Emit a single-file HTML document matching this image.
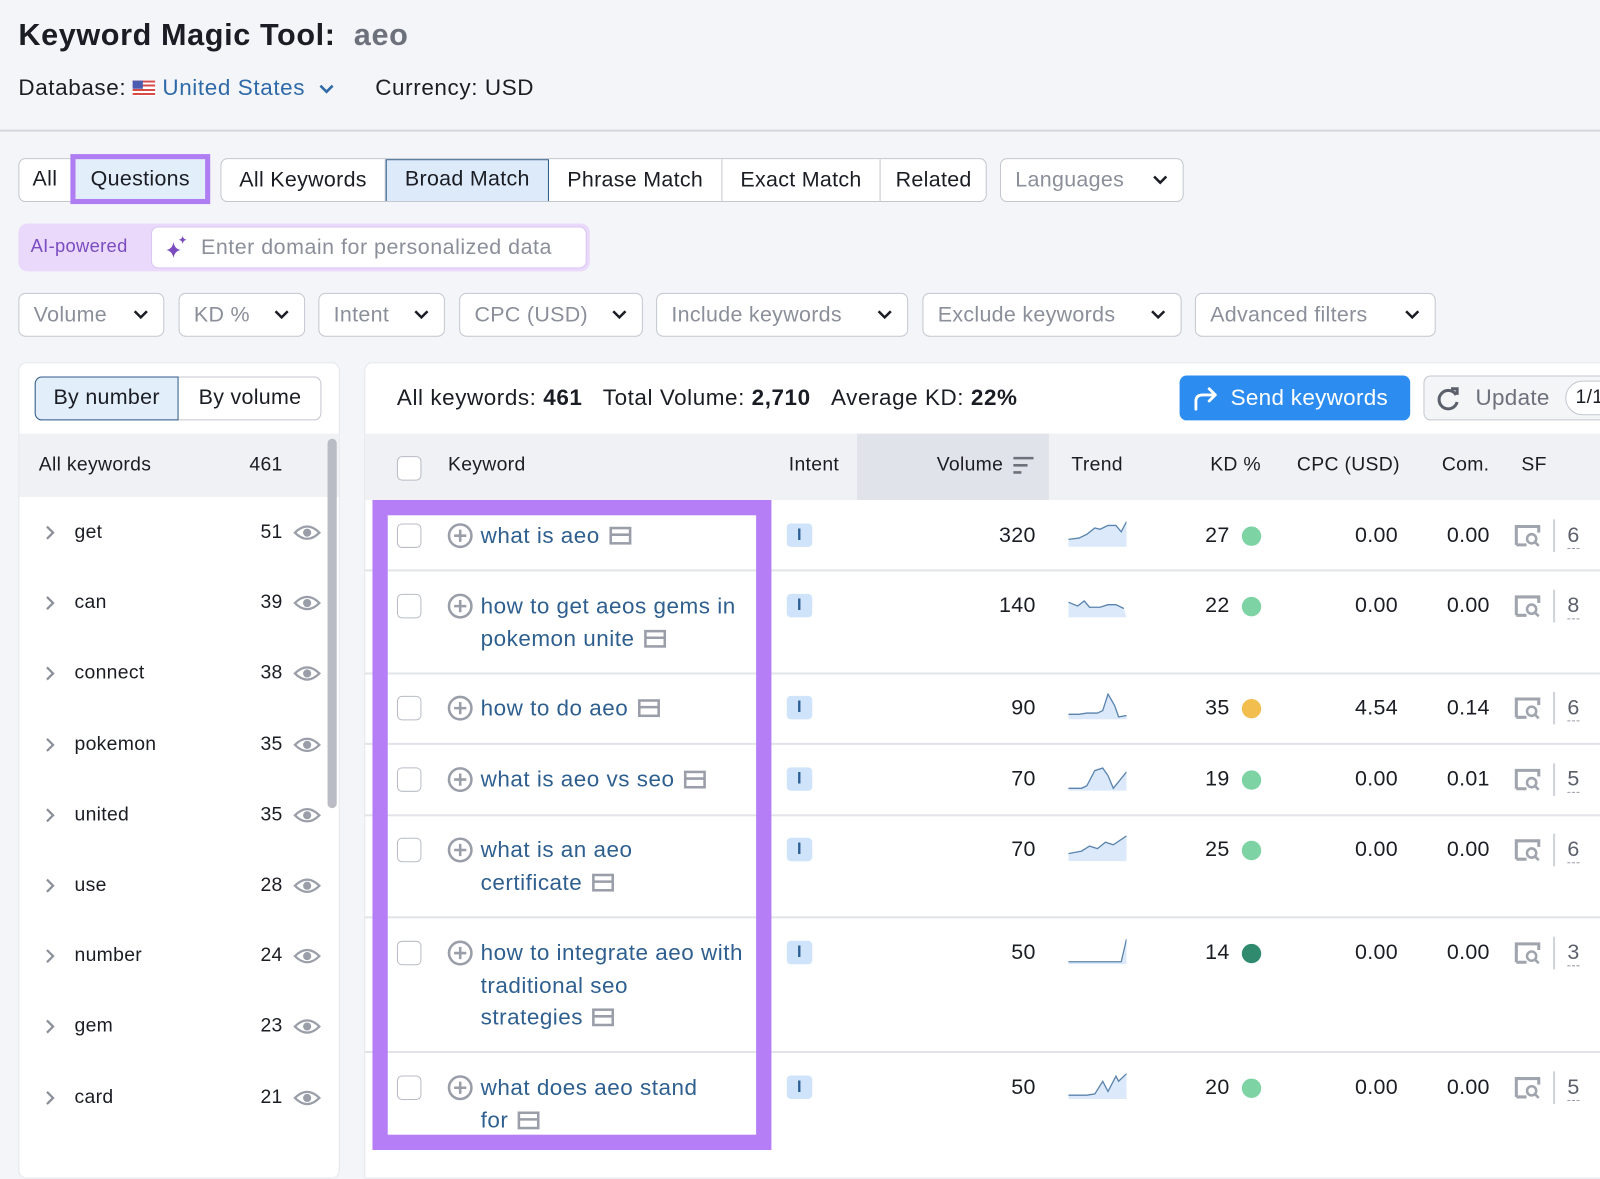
<!DOCTYPE html>
<html><head><meta charset="utf-8"><style>
*{box-sizing:border-box;margin:0;padding:0}
html,body{width:1600px;height:1152px;overflow:hidden;background:#f4f5f9}
body{font-family:"Liberation Sans",sans-serif;color:#1b1d24;letter-spacing:0.3px}
#w{position:absolute;left:0;top:0;width:1568px;height:1129px;transform:scale(1.0204);transform-origin:0 0}
.a{position:absolute}
.btn{position:absolute;height:43px;border:1px solid #c4c7d0;background:#fff;border-radius:7px;font-size:21px;line-height:41px;padding-left:14px;color:#8b8f9a}
.btn svg{position:absolute;right:14px;top:14px}
.tab{position:absolute;top:0;height:43px;line-height:41px;font-size:21px;text-align:center;border-right:1px solid #c4c7d0}
.kw{color:#2f5f8f;font-size:22px;line-height:31.5px;letter-spacing:0.5px}
.num{position:absolute;font-size:21px;text-align:right}
.cb{position:absolute;width:24px;height:24px;border:1.5px solid #b8bcc6;border-radius:5px;background:#fff}
.ib{position:absolute;width:25px;height:23px;background:#cfe3fa;border-radius:4px;color:#2c5f96;font-size:16px;font-weight:bold;text-align:center;line-height:23px}
.dot{position:absolute;width:19px;height:19px;border-radius:50%}
.sep{position:absolute;left:357px;width:1211px;height:1.5px;background:#e2e4ea}
</style></head><body><div id="w">
<div class="a" style="left:18px;top:18px;font-size:30px;font-weight:bold;letter-spacing:0.6px">Keyword Magic Tool:&nbsp; <span style="color:#6d717b">aeo</span></div>
<div class="a" style="left:18px;top:73px;font-size:22px;letter-spacing:0.6px">Database: <span style="display:inline-block;width:22px;height:15px;vertical-align:-1px;background:repeating-linear-gradient(#d64a4a 0 2px,#fff 2px 4px);position:relative"><span style="position:absolute;left:0;top:0;width:10px;height:8px;background:#4a5bb0"></span></span> <span style="color:#2f6aa8">United States</span> <svg width="16" height="12" viewBox="0 0 16 12" style="margin-left:6px"><path d="M2 3l6 6 6-6" stroke="#2f6aa8" stroke-width="2.5" fill="none"/></svg><span style="margin-left:40px">Currency: USD</span></div>
<div class="a" style="left:0;top:127px;width:1568px;height:2px;background:#d5d7de"></div>

<div class="a" style="left:18px;top:155px;width:188px;height:43px;border:1px solid #c4c7d0;border-radius:7px;background:#fff"></div>
<div class="a" style="left:18px;top:155px;width:52px;height:43px;line-height:41px;text-align:center;font-size:21px">All</div>
<div class="a" style="left:69px;top:151px;width:137px;height:49px;border:5px solid #b07ef3;background:#e3eefb;font-size:21px;line-height:39px;text-align:center">Questions</div>
<div class="a" style="left:216px;top:155px;width:751px;height:43px;border:1px solid #c4c7d0;border-radius:7px;background:#fff;overflow:hidden;color:#1b1d24">
<div class="tab" style="left:0;width:161px">All Keywords</div>
<div class="tab" style="left:161px;width:160px;background:#dceaf9;border:1.5px solid #2f5a86;line-height:38px">Broad Match</div>
<div class="tab" style="left:321px;width:170px">Phrase Match</div>
<div class="tab" style="left:491px;width:155px">Exact Match</div>
<div class="tab" style="left:646px;width:104px;border:none">Related</div>
</div>
<div class="btn" style="left:980px;top:155px;width:180px">Languages<svg width="16" height="12"><path d="M2 3l6 6 6-6" stroke="#1b1d24" stroke-width="2.5" fill="none"/></svg></div>

<div class="a" style="left:18px;top:219px;width:560px;height:47px;background:#ead9fb;border-radius:9px"></div>
<div class="a" style="left:30px;top:231px;font-size:18px;color:#7a4cc0">AI-powered</div>
<div class="a" style="left:148px;top:222px;width:427px;height:41px;background:#fff;border:1px solid #d9c7f3;border-radius:7px;font-size:21px;color:#8b8f9a;line-height:39px;padding-left:48px;letter-spacing:0.5px">Enter domain for personalized data</div>
<svg class="a" style="left:160px;top:229px" width="26" height="26" viewBox="0 0 26 26"><path d="M10 8 Q11 15 17 16 Q11 17 10 24 Q9 17 3 16 Q9 15 10 8Z" fill="#7a4cc0"/><path d="M19 2 Q19.5 5.5 23 6 Q19.5 6.5 19 10 Q18.5 6.5 15 6 Q18.5 5.5 19 2Z" fill="#7a4cc0"/></svg>

<div class="btn" style="left:18px;top:287px;width:143px">Volume<svg width="16" height="12"><path d="M2 3l6 6 6-6" stroke="#1b1d24" stroke-width="2.5" fill="none"/></svg></div>
<div class="btn" style="left:175px;top:287px;width:124px">KD %<svg width="16" height="12"><path d="M2 3l6 6 6-6" stroke="#1b1d24" stroke-width="2.5" fill="none"/></svg></div>
<div class="btn" style="left:312px;top:287px;width:124px">Intent<svg width="16" height="12"><path d="M2 3l6 6 6-6" stroke="#1b1d24" stroke-width="2.5" fill="none"/></svg></div>
<div class="btn" style="left:450px;top:287px;width:180px">CPC (USD)<svg width="16" height="12"><path d="M2 3l6 6 6-6" stroke="#1b1d24" stroke-width="2.5" fill="none"/></svg></div>
<div class="btn" style="left:643px;top:287px;width:247px">Include keywords<svg width="16" height="12"><path d="M2 3l6 6 6-6" stroke="#1b1d24" stroke-width="2.5" fill="none"/></svg></div>
<div class="btn" style="left:904px;top:287px;width:254px">Exclude keywords<svg width="16" height="12"><path d="M2 3l6 6 6-6" stroke="#1b1d24" stroke-width="2.5" fill="none"/></svg></div>
<div class="btn" style="left:1171px;top:287px;width:236px">Advanced filters<svg width="16" height="12"><path d="M2 3l6 6 6-6" stroke="#1b1d24" stroke-width="2.5" fill="none"/></svg></div>

<div class="a" style="left:18px;top:355px;width:315px;height:800px;background:#fff;border-radius:8px;border:1px solid #e6e7ec"></div>
<div class="a" style="left:34px;top:369px;width:281px;height:43px;border:1px solid #c4c7d0;border-radius:7px;background:#fff"></div>
<div class="a" style="left:34px;top:369px;width:141px;height:43px;border:1.5px solid #2f5a86;border-radius:7px 0 0 7px;background:#e3eefb;font-size:21px;line-height:40px;text-align:center">By number</div>
<div class="a" style="left:175px;top:369px;width:140px;height:43px;font-size:21px;line-height:41px;text-align:center">By volume</div>
<div class="a" style="left:19px;top:425px;width:313px;height:62px;background:#f0f1f5"></div>
<div class="a" style="left:38px;top:445px;font-size:19px">All keywords</div>
<div class="a" style="left:230px;top:445px;width:47px;text-align:right;font-size:19px">461</div>
<div class="a" style="left:321px;top:430px;width:9px;height:362px;background:#b9bcc4;border-radius:5px"></div>
<div id="lst"></div>

<div class="a" style="left:357px;top:355px;width:1240px;height:800px;background:#fff;border-radius:8px 0 0 0;border:1px solid #e6e7ec"></div>
<div class="a" style="left:389px;top:377px;font-size:22px;letter-spacing:0.55px">All keywords: <b>461</b>&nbsp;&nbsp;&nbsp;Total Volume: <b>2,710</b>&nbsp;&nbsp;&nbsp;Average KD: <b>22%</b></div>
<div class="a" style="left:1156px;top:368px;width:226px;height:44px;background:#2d8cf0;border-radius:7px;color:#fff;font-size:22px;line-height:44px;padding-left:50px">Send keywords</div>
<svg class="a" style="left:1168px;top:377px" width="28" height="26" viewBox="0 0 28 26"><path d="M4 24 V16 Q4 10 11 10 H23 M17 4 L23 10 L17 16" stroke="#fff" stroke-width="2.8" fill="none" stroke-linecap="round" stroke-linejoin="round"/></svg>
<div class="a" style="left:1395px;top:368px;width:200px;height:44px;background:#f4f5f7;border:1px solid #c4c7d0;border-radius:7px;color:#6d717b;font-size:22px;line-height:42px;padding-left:50px">Update</div>
<svg class="a" style="left:1406px;top:378px" width="26" height="26" viewBox="0 0 26 26"><path d="M21 9 A9 9 0 1 0 22 16" stroke="#5c606b" stroke-width="3" fill="none"/><path d="M16 3 L22 3 L22 9" stroke="#5c606b" stroke-width="3" fill="none"/></svg>
<div class="a" style="left:1534px;top:373px;width:60px;height:34px;border:1px solid #c4c7d0;border-radius:17px;font-size:19px;line-height:32px;padding-left:9px;background:#fff">1/1</div>

<div class="a" style="left:358px;top:425px;width:1210px;height:65px;background:#f0f1f5"></div>
<div class="a" style="left:840px;top:425px;width:188px;height:65px;background:#e1e3ea"></div>
<div class="cb" style="left:389px;top:447px"></div>
<div class="a" style="left:439px;top:445px;font-size:19px">Keyword</div>
<div class="a" style="left:773px;top:445px;font-size:19px">Intent</div>
<div class="a" style="left:918px;top:445px;font-size:19px">Volume</div>
<svg class="a" style="left:993px;top:447px" width="20" height="18"><path d="M0 2H20M0 9H14M0 16H8" stroke="#6d717b" stroke-width="2.5"/></svg>
<div class="a" style="left:1050px;top:445px;font-size:19px">Trend</div>
<div class="a" style="left:1186px;top:445px;font-size:19px">KD %</div>
<div class="a" style="left:1271px;top:445px;font-size:19px">CPC (USD)</div>
<div class="a" style="left:1413px;top:445px;font-size:19px">Com.</div>
<div class="a" style="left:1491px;top:445px;font-size:19px">SF</div>
<div id="rows"></div>

<div class="a" style="left:365px;top:490px;width:391px;height:637px;border:15px solid #b57ef7"></div>
</div>
<script>
var L=[["get",51],["can",39],["connect",38],["pokemon",35],["united",35],["use",28],["number",24],["gem",23],["card",21]],h="";
L.forEach(function(r,i){var y=522+i*69.2;
h+='<svg class="a" style="left:43px;top:'+(y-8)+'px" width="12" height="16"><path d="M3 2l6 6-6 6" stroke="#8b8f9a" stroke-width="2.2" fill="none"/></svg>';
h+='<div class="a" style="left:73px;top:'+(y-11)+'px;font-size:19px">'+r[0]+'</div>';
h+='<div class="a" style="left:230px;top:'+(y-11)+'px;width:47px;text-align:right;font-size:19px">'+r[1]+'</div>';
h+='<svg class="a" style="left:287px;top:'+(y-10)+'px" width="28" height="20" viewBox="0 0 28 20"><path d="M2 10 Q14 -2 26 10 Q14 22 2 10Z" stroke="#9a9ea8" stroke-width="2.2" fill="none"/><circle cx="14" cy="10" r="4" fill="#9a9ea8"/></svg>';});
document.getElementById('lst').innerHTML=h;
var R=[[525,["what is aeo"],320,27,"#7dd3a3","0.00","0.00",6,"M0 14 L8 13 L14 10 L20 5 L24 6 L30 3 L36 3 L40 8 L44 0"],
[594,["how to get aeos gems in","pokemon unite"],140,22,"#7dd3a3","0.00","0.00",8,"M0 8 L7 11 L12 7 L16 12 L24 12 L30 10 L36 10 L42 13"],
[694,["how to do aeo"],90,35,"#f2bf4e","4.54","0.14",6,"M0 16 L8 16 L14 15 L22 15 L26 13 L30 0 L35 9 L38 18 L44 17"],
[764,["what is aeo vs seo"],70,19,"#7dd3a3","0.00","0.01",5,"M0 18 L10 18 L14 16 L20 4 L26 2 L30 8 L34 18 L44 5"],
[833,["what is an aeo","certificate"],70,25,"#7dd3a3","0.00","0.00",6,"M0 14 L10 12 L16 8 L22 10 L28 5 L34 7 L44 0"],
[934,["how to integrate aeo with","traditional seo","strategies"],50,14,"#2f8a6e","0.00","0.00",3,"M0 18 L40 18 L44 0"],
[1066,["what does aeo stand","for"],50,20,"#7dd3a3","0.00","0.00",5,"M0 17 L14 17 L20 16 L26 6 L30 14 L36 2 L38 6 L44 0"]];
var S=[558,659,728,798,898,1030],g="";
S.forEach(function(y){g+='<div class="sep" style="top:'+y+'px"></div>';});
var ic='<svg width="22" height="18" viewBox="0 0 22 18" style="vertical-align:-2px;margin-left:9px"><rect x="1.5" y="1.5" width="19" height="15" stroke="#9a9ea8" stroke-width="2.5" fill="none"/><path d="M1.5 8H20.5" stroke="#9a9ea8" stroke-width="2.5"/></svg>';
R.forEach(function(r){var y=r[0];
g+='<div class="cb" style="left:389px;top:'+(y-12)+'px"></div>';
g+='<svg class="a" style="left:438px;top:'+(y-13)+'px" width="26" height="26" viewBox="0 0 26 26"><circle cx="13" cy="13" r="11" stroke="#9a9ea8" stroke-width="2.5" fill="none"/><path d="M13 7V19M7 13H19" stroke="#9a9ea8" stroke-width="2.5"/></svg>';
g+='<div class="a kw" style="left:471px;top:'+(y-16)+'px;width:270px">'+r[1].join('<br>')+ic+'</div>';
g+='<div class="ib" style="left:771px;top:'+(y-12)+'px">I</div>';
g+='<div class="num" style="left:915px;width:100px;top:'+(y-12)+'px">'+r[2]+'</div>';
g+='<svg class="a" style="left:1047px;top:'+(y-15)+'px" width="57" height="26" viewBox="0 -1 44 21" preserveAspectRatio="none"><path d="'+r[8]+' L44 20 L0 20Z" fill="#dbe9fa"/><path d="'+r[8]+'" stroke="#5b84ad" stroke-width="1.3" fill="none" vector-effect="non-scaling-stroke"/></svg>';
g+='<div class="num" style="left:1150px;width:55px;top:'+(y-12)+'px">'+r[3]+'</div>';
g+='<div class="dot" style="left:1217px;top:'+(y-9)+'px;background:'+r[4]+'"></div>';
g+='<div class="num" style="left:1270px;width:100px;top:'+(y-12)+'px">'+r[5]+'</div>';
g+='<div class="num" style="left:1360px;width:100px;top:'+(y-12)+'px">'+r[6]+'</div>';
g+='<svg class="a" style="left:1484px;top:'+(y-11)+'px" width="26" height="22" viewBox="0 0 26 22"><path d="M2 20V2H24V8" stroke="#a0a4ad" stroke-width="3" fill="none"/><path d="M2 20H12" stroke="#a0a4ad" stroke-width="3"/><circle cx="17" cy="14" r="4.5" stroke="#a0a4ad" stroke-width="2.5" fill="none"/><path d="M20 17L24 21" stroke="#a0a4ad" stroke-width="2.5"/></svg>';
g+='<div class="a" style="left:1522px;top:'+(y-16)+'px;width:1.5px;height:32px;background:#d0d3da"></div>';
g+='<div class="a" style="left:1536px;top:'+(y-12)+'px;font-size:21px;color:#5c606b;border-bottom:1.5px dashed #9a9ea8;line-height:24px">'+r[7]+'</div>';});
document.getElementById('rows').innerHTML=g;
</script>
</body></html>
